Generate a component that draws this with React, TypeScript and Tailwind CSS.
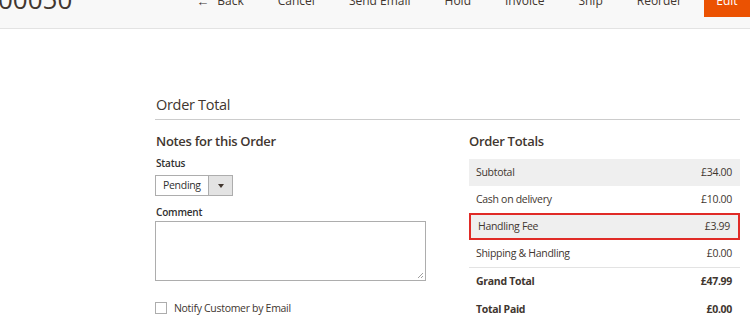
import React from 'react';

const actions = ['Cancel', 'Send Email', 'Hold', 'Invoice', 'Ship', 'Reorder'];

const totals = [
  { label: 'Subtotal', value: '£34.00', shade: true },
  { label: 'Cash on delivery', value: '£10.00' },
  { label: 'Handling Fee', value: '£3.99', shade: true, marked: true },
  { label: 'Shipping & Handling', value: '£0.00' },
];

const App: React.FC = () => {
  return (
    <div className="w-[750px] h-[315px] overflow-hidden bg-white text-[#303030] font-['Open_Sans',sans-serif]">
      {/* page actions bar */}
      <div className="h-[29px] bg-[#f8f8f8] border-b border-[#e3e3e3] flex items-start">
        <h1 className="-ml-[2px] -mt-[16px] text-[26px] leading-[30px] font-normal text-[#41362f]">00050</h1>
        <div className="ml-auto flex items-start -mt-[7px] text-[12px] leading-[16px] text-[#41362f]">
          <button className="flex items-center gap-[8px] px-[17px]">
            <span className="text-[13px]">←</span>
            <span>Back</span>
          </button>
          {actions.map((a) => (
            <button key={a} className="px-[17px]">{a}</button>
          ))}
          <button className="ml-[5px] w-[46px] h-[24px] bg-[#eb5202] text-white flex items-start justify-center">Edit</button>
        </div>
      </div>

      <div className="ml-[155px] mr-[10px] pt-[65px]">
        <div className="border-b border-[#cccccc] pb-[3px] mb-[12px]">
          <h2 className="text-[14.5px] tracking-[-0.3px] leading-[22px] text-[#41362f] pl-[1px]">Order Total</h2>
        </div>

        <div className="flex gap-[43px]">
          {/* notes */}
          <div className="w-[271px]">
            <h3 className="text-[13px] tracking-[-0.3px] leading-[18px] font-semibold text-[#41362f] pl-[1px] mb-[6px]">Notes for this Order</h3>
            <div className="text-[10px] tracking-[-0.2px] font-semibold leading-[14px] pl-[1px] mb-[5px]">Status</div>
            <div className="flex w-[78px] h-[21px] border border-[#adadad] text-[10.5px] tracking-[-0.3px]">
              <div className="flex-1 flex items-center pl-[7px] text-[#303030]">Pending</div>
              <div className="w-[24px] bg-[#e3e3e3] border-l border-[#adadad] flex items-center justify-center">
                <svg width="6" height="4" viewBox="0 0 6 4"><path d="M0 0h6L3 4z" fill="#41362f" /></svg>
              </div>
            </div>
            <div className="text-[10px] tracking-[-0.2px] font-semibold leading-[14px] pl-[1px] mt-[9px] mb-[2px]">Comment</div>
            <div className="relative h-[60px] border border-[#adadad] bg-white">
              <svg className="absolute right-[2px] bottom-[2px]" width="6" height="6" viewBox="0 0 6 6">
                <path d="M1 6L6 1M4 6L6 4" stroke="#888" strokeWidth="0.8" />
              </svg>
            </div>
            <label className="flex items-center mt-[20px] text-[10.5px] tracking-[-0.3px] leading-[14px] text-[#41362f]">
              <span className="w-[12px] h-[12px] border border-[#adadad] bg-white mr-[7px]" />
              Notify Customer by Email
            </label>
          </div>

          {/* totals */}
          <div className="w-[271px]">
            <h3 className="text-[13px] tracking-[-0.3px] leading-[18px] font-semibold text-[#41362f] mb-[9px]">Order Totals</h3>
            <div className="text-[10.5px] tracking-[-0.3px] text-[#41362f]">
              {totals.map((t) => (
                <div
                  key={t.label}
                  className={`flex justify-between items-center h-[27px] pl-[7px] pr-[8px] ${t.shade ? 'bg-[#efefef]' : ''} ${t.marked ? 'border-2 border-[#e02b27] pl-[5px] pr-[6px]' : ''}`}
                >
                  <span>{t.label}</span>
                  <span>{t.value}</span>
                </div>
              ))}
              <div className="border-t border-[#e3e3e3]" />
              <div className="flex justify-between items-center h-[28px] pl-[7px] pr-[8px] font-bold">
                <span>Grand Total</span>
                <span>£47.99</span>
              </div>
              <div className="flex justify-between items-center h-[28px] pl-[7px] pr-[8px] font-bold">
                <span>Total Paid</span>
                <span>£0.00</span>
              </div>
            </div>
          </div>
        </div>
      </div>
    </div>
  );
};

export default App;
